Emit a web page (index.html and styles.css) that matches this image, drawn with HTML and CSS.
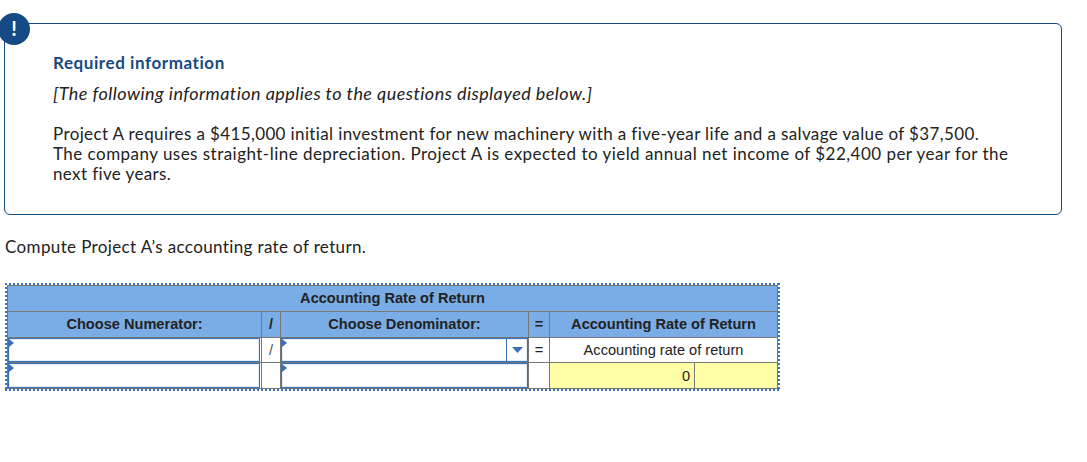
FILE: index.html
```
<!DOCTYPE html>
<html lang="en">
<head>
<meta charset="utf-8">
<title>Accounting Rate of Return</title>
<link rel="stylesheet" href="styles.css">
</head>
<body>
<div class="info">
    <span class="badge">!</span>
    <h2>Required information</h2>
    <p class="applies">[The following information applies to the questions displayed below.]</p>
    <p class="story"><span class="line1">Project A requires a $415,000 initial investment for new machinery with a five-year life and a salvage value of $37,500.</span><br>
    <span class="line2">The company uses straight-line depreciation. Project A is expected to yield annual net income of $22,400 per year for the</span><br>
    <span class="line3">next five years.</span></p>
</div>
<p class="question">Compute Project A’s accounting rate of return.</p>
<div class="sheet">
<table>
    <colgroup><col class="num"><col class="slash"><col class="den"><col class="eq"><col class="res"><col class="unit"></colgroup>
    <tr class="head"><th colspan="6">Accounting Rate of Return</th></tr>
    <tr class="head">
        <th>Choose Numerator:</th>
        <th>/</th>
        <th>Choose Denominator:</th>
        <th>=</th>
        <th colspan="2">Accounting Rate of Return</th>
    </tr>
    <tr class="pick">
        <td class="entry"><div class="field short"></div></td>
        <td class="op">/</td>
        <td class="entry"><div class="field select"><span class="drop"><svg width="11" height="6" viewBox="0 0 11 6"><path d="M0 0h11L5.5 6z" fill="#3972ba"/></svg></span></div></td>
        <td>=</td>
        <td colspan="2">Accounting rate of return</td>
    </tr>
    <tr class="values">
        <td class="entry"><div class="field short"></div></td>
        <td></td>
        <td class="entry"><div class="field"></div></td>
        <td></td>
        <td class="answer">0</td>
        <td class="answer"></td>
    </tr>
</table>
</div>
</body>
</html>
```
FILE: styles.css
```
* { margin: 0; padding: 0; box-sizing: border-box; }
body { background: #fff; color: #222; font: 17px/20px Lato, "Open Sans", sans-serif; padding: 23px 0 0 4px; }
.info { position: relative; width: 1058px; height: 192px; border: 1px solid #164a84; border-radius: 6px; padding: 29px 0 0 48px; white-space: nowrap; }
.badge { position: absolute; left: -7px; top: -11px; width: 32px; height: 32px; border-radius: 50%; background: #164a84; color: #fff; font-size: 20px; font-weight: bold; line-height: 31px; text-align: center; }
h2 { color: #164a84; font-size: 17px; line-height: 20px; letter-spacing: 0.57px; }
.applies { margin-top: 10px; font-style: italic; font-size: 18px; letter-spacing: 0.45px; }
.story { margin-top: 21px; }
.line1, .line3 { letter-spacing: 0.375px; }
.line2 { letter-spacing: 0.47px; }
.question { margin: 22px 0 0 1px; letter-spacing: 0.37px; }
/* square dots, 2px on and 2px off, along all four sides */
.sheet {
    width: 775px; height: 108px; margin: 26px 0 0 1px; padding: 2px;
    background:
        repeating-linear-gradient(90deg, #3972ba 0 2px, transparent 2px 4px) top / 100% 2px no-repeat,
        repeating-linear-gradient(90deg, #3972ba 0 2px, transparent 2px 4px) bottom / 100% 2px no-repeat,
        repeating-linear-gradient(#3972ba 0 2px, transparent 2px 4px) left / 2px 100% no-repeat,
        repeating-linear-gradient(#3972ba 0 2px, transparent 2px 4px) right / 2px 100% no-repeat;
}
table { width: 771px; table-layout: fixed; border-collapse: collapse; font: 14.6px/16px "Liberation Sans", Arial, sans-serif; }
.num { width: 254px; }
.slash { width: 19px; }
.den { width: 248px; }
.eq { width: 21px; }
.res { width: 145px; }
.unit { width: 83px; }
th, td { border: 1px solid #767676; text-align: center; }
th { padding-bottom: 2px; }
tr { height: 26px; }
.head { background: #7aace5; }
.pick { height: 25px; }
.op { color: #555; }
td.entry { vertical-align: top; }
.field { position: relative; height: 24px; border: 1px solid #3972ba; box-shadow: inset 0 0 0 1px #e3edf7; }
.values .field { height: 25px; }
.short { margin-right: 1px; }
/* corner marker */
.field:before { content: ""; position: absolute; left: 0; top: 0; border-left: 5px solid #3972ba; border-top: 4px solid transparent; border-bottom: 4px solid transparent; }
.select { display: flex; justify-content: flex-end; }
.drop { width: 21px; border-left: 1px solid #3972ba; display: flex; align-items: center; justify-content: center; }
.answer { background: #ffffa8; text-align: right; padding-right: 4px; }
```
